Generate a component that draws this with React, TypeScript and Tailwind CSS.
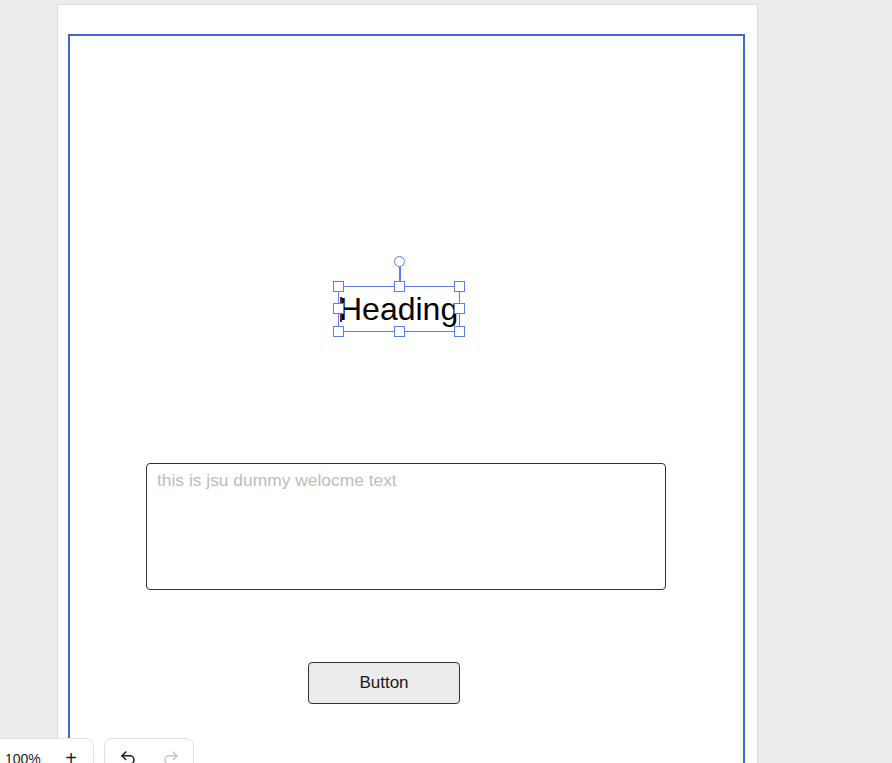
import { Undo2, Redo2 } from 'lucide-react';

const handle = 'absolute w-[11px] h-[11px] bg-white border-[1.5px] border-[#5b7fe8]';

function SelectedHeading() {
  return (
    <div className="absolute left-[268px] top-[250px] w-[122px] h-[46px] border border-[#5b7fe8]">
      {/* rotate handle */}
      <div className="absolute left-[55px] top-[-31px] w-[11px] h-[11px] rounded-full bg-white border-[1.5px] border-[#5b7fe8]" />
      <div className="absolute left-[60px] top-[-20px] w-[1.5px] h-[20px] bg-[#5b7fe8]" />

      <div className="text-[32px] leading-[44px] text-black font-['Liberation_Sans',Arial,sans-serif] whitespace-nowrap">
        Heading
      </div>
      <div className="absolute left-[1px] top-[10px] w-[1.5px] h-[25px] bg-[#7a1010]" />

      <div className={`${handle} left-[-6px] top-[-6px]`} />
      <div className={`${handle} left-[55px] top-[-6px]`} />
      <div className={`${handle} right-[-6px] top-[-6px]`} />
      <div className={`${handle} left-[-6px] top-[16px]`} />
      <div className={`${handle} right-[-6px] top-[16px]`} />
      <div className={`${handle} left-[-6px] bottom-[-6px]`} />
      <div className={`${handle} left-[55px] bottom-[-6px]`} />
      <div className={`${handle} right-[-6px] bottom-[-6px]`} />
    </div>
  );
}

export default function App() {
  return (
    <div className="relative h-screen overflow-hidden bg-[#ececec] font-['Liberation_Sans',Arial,sans-serif]">
      {/* page */}
      <div className="ml-[57px] mt-[4px] w-[701px] h-[820px] bg-white border border-[#dcdcdc] pt-[29px] pl-[10px]">
        {/* frame */}
        <div className="relative w-[677px] h-[780px] border-2 border-[#4466cc]">
          <SelectedHeading />

          <textarea
            readOnly
            placeholder="this is jsu dummy welocme text"
            className="absolute left-[76px] top-[427px] w-[520px] h-[127px] resize-none rounded-[4px] border border-[#333] bg-white pl-[10px] pt-[6px] text-[17.4px] leading-[20px] text-black placeholder:text-[#bdbdbd] outline-none"
          />

          <button className="absolute left-[238px] top-[626px] w-[152px] h-[42px] rounded-[4px] border border-[#333] bg-[#ececec] text-[17px] text-[#1a1a1a]">
            Button
          </button>
        </div>
      </div>

      {/* bottom toolbar */}
      <div className="absolute left-[-36px] top-[738px] flex gap-[10px]">
        <div className="flex h-10 w-[130px] items-center rounded-lg border border-[#e0e0e0] bg-white">
          <div className="w-[40px] text-center text-[18px] text-[#222]">−</div>
          <div className="w-[44px] pt-[2px] text-[14px] font-medium text-[#1b1b1f]">100%</div>
          <div className="flex-1 text-center text-[20px] leading-none text-[#222]">+</div>
        </div>
        <div className="flex h-10 w-[90px] items-center rounded-lg border border-[#e0e0e0] bg-white">
          <div className="flex w-[45px] justify-center pl-[2px]">
            <Undo2 size={18} strokeWidth={2} className="text-[#1b1b1f]" />
          </div>
          <div className="flex w-[45px] justify-center">
            <Redo2 size={18} strokeWidth={2} className="text-[#c4c4c4]" />
          </div>
        </div>
      </div>
    </div>
  );
}
